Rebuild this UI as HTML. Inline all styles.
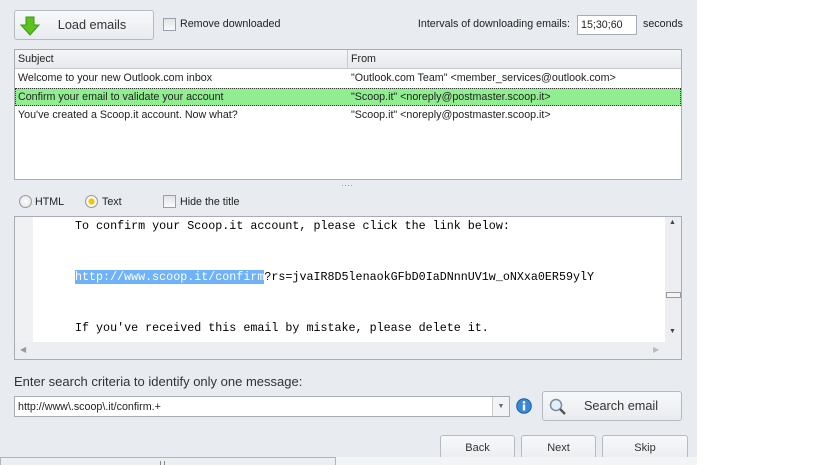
<!DOCTYPE html>
<html><head><style>
*{box-sizing:border-box;margin:0;padding:0}
body{width:818px;height:465px;background:#fff;font-family:"Liberation Sans",sans-serif;font-size:10.7px;color:#222;position:relative;overflow:hidden}
.p{position:absolute;left:0;top:0;width:697px;height:465px;background:#e8ebf0}
.a{position:absolute;white-space:nowrap}
.btn{position:absolute;border:1px solid #b5bac2;border-radius:3px;background:linear-gradient(#f7f8fa,#e9ecf0);text-align:center;color:#333}
.cb{position:absolute;width:13px;height:13px;border:1px solid #9aa0a8;background:linear-gradient(#e2e4e8,#fafafa)}
.mono{font-family:"Liberation Mono",monospace;font-size:11.7px;color:#000}
</style></head><body>
<div class="p">
<div class="btn" style="left:14px;top:10px;width:140px;height:30px;font-size:12.7px;line-height:28px;padding-left:16px">Load emails
<svg style="position:absolute;left:5px;top:5px" width="20" height="20" viewBox="0 0 20 20"><path d="M6 1h8v8h5l-9 10-9-10h5z" fill="#5cc21f" stroke="#3a9a10" stroke-width="1"/></svg></div>
<div class="cb" style="left:163px;top:18px"></div>
<div class="a" style="left:180px;top:18px">Remove downloaded</div>
<div class="a" style="right:127px;top:18px">Intervals of downloading emails:</div>
<div class="a" style="left:577px;top:15px;width:60px;height:20px;background:#fff;border:1px solid #a8adb5;padding:3px 3px">15;30;60</div>
<div class="a" style="left:643px;top:18px">seconds</div>

<div class="a" style="left:14px;top:49px;width:668px;height:131px;background:#fff;border:1px solid #a8adb5"></div>
<div class="a" style="left:15px;top:50px;width:666px;height:19px;background:linear-gradient(#f4f5f7,#e6e9ed);border-bottom:1px solid #c5c9cf"></div>
<div class="a" style="left:347px;top:50px;width:1px;height:19px;background:#c5c9cf"></div>
<div class="a" style="left:18px;top:53px">Subject</div>
<div class="a" style="left:351px;top:53px">From</div>
<div class="a" style="left:18px;top:72px">Welcome to your new Outlook.com inbox</div>
<div class="a" style="left:351px;top:72px">"Outlook.com Team" &lt;member_services@outlook.com&gt;</div>
<div class="a" style="left:15px;top:88px;width:666px;height:18px;background:#90ee90;border:1px dotted #333"></div>
<div class="a" style="left:18px;top:91px">Confirm your email to validate your account</div>
<div class="a" style="left:351px;top:91px">"Scoop.it" &lt;noreply@postmaster.scoop.it&gt;</div>
<div class="a" style="left:18px;top:109px">You've created a Scoop.it account. Now what?</div>
<div class="a" style="left:351px;top:109px">"Scoop.it" &lt;noreply@postmaster.scoop.it&gt;</div>
<div class="a" style="left:341px;top:180px;font-size:9px;color:#889">····</div>

<div class="a" style="left:19px;top:195px;width:13px;height:13px;border-radius:50%;border:1px solid #999;background:radial-gradient(#fff,#ddd)"></div>
<div class="a" style="left:35px;top:196px">HTML</div>
<div class="a" style="left:85px;top:195px;width:13px;height:13px;border-radius:50%;border:1px solid #999;background:radial-gradient(#f8c300 35%,#fff 45%,#ddd)"></div>
<div class="a" style="left:102px;top:196px">Text</div>
<div class="cb" style="left:163px;top:195px"></div>
<div class="a" style="left:180px;top:196px">Hide the title</div>

<div class="a" style="left:14px;top:216px;width:668px;height:144px;background:#fff;border:1px solid #a8adb5"></div>
<div class="a" style="left:15px;top:217px;width:18px;height:125px;background:#f0f1f3"></div>
<div class="a mono" style="left:75px;top:219px">To confirm your Scoop.it account, please click the link below:</div>
<div class="a mono" style="left:75px;top:270px"><span style="background:#6fb2fa;color:#fff">http://www.scoop.it/confirm</span>?rs=jvaIR8D5lenaokGFbD0IaDNnnUV1w_oNXxa0ER59ylY</div>
<div class="a mono" style="left:75px;top:321px">If you've received this email by mistake, please delete it.</div>
<div class="a" style="left:665px;top:217px;width:16px;height:125px;background:#eceef1"></div>
<div class="a" style="left:666px;top:292px;width:15px;height:6px;border:1px solid #999;background:#f4f4f4"></div>
<div class="a" style="left:669px;top:219px;font-size:7px;color:#444">▲</div>
<div class="a" style="left:669px;top:328px;font-size:7px;color:#444">▼</div>
<div class="a" style="left:15px;top:342px;width:666px;height:17px;background:#eceef1"></div>
<div class="a" style="left:20px;top:345px;font-size:8px;color:#999">◀</div>
<div class="a" style="left:653px;top:345px;font-size:8px;color:#bbb">▶</div>

<div class="a" style="left:14px;top:374px;font-size:13px;color:#333">Enter search criteria to identify only one message:</div>
<div class="a" style="left:14px;top:396px;width:496px;height:21px;background:#fff;border:1px solid #a8adb5;padding:4px 3px;font-size:10.7px">http://www\.scoop\.it/confirm.+</div>
<div class="a" style="left:492px;top:397px;width:17px;height:19px;border-left:1px solid #ccc;background:#f2f3f5;font-size:7px;color:#666;text-align:center;line-height:19px">▼</div>
<svg class="a" style="left:516px;top:398px" width="16" height="16" viewBox="0 0 16 16"><circle cx="8" cy="8" r="7.3" fill="#3a87d6" stroke="#1d5fa8"/><circle cx="8" cy="4.3" r="1.3" fill="#fff"/><rect x="6.8" y="6.5" width="2.4" height="6" fill="#fff"/></svg>
<div class="btn" style="left:542px;top:391px;width:140px;height:30px;font-size:12.7px;line-height:28px;padding-left:18px">Search email
<svg style="position:absolute;left:5px;top:5px" width="20" height="20" viewBox="0 0 20 20"><circle cx="8" cy="8" r="5.5" fill="#e4eef8" stroke="#7a8ca0" stroke-width="1.5"/><path d="M12 12l5 5" stroke="#555" stroke-width="2.5"/></svg></div>
<div class="btn" style="left:440px;top:435px;width:75px;height:28px;line-height:24px;font-size:11px">Back</div>
<div class="btn" style="left:521px;top:435px;width:75px;height:28px;line-height:24px;font-size:11px">Next</div>
<div class="btn" style="left:602px;top:435px;width:86px;height:28px;line-height:24px;font-size:11px">Skip</div>
<div class="a" style="left:0;top:457px;width:697px;height:8px;background:#f3f4f6"></div>
<div class="a" style="left:0;top:457px;width:336px;height:8px;background:#eceef1;border:1px solid #b0b4ba;border-bottom:none"></div>
<div class="a" style="left:160px;top:461px;width:5px;height:4px;border-left:1px solid #888;border-right:1px solid #888"></div>
</div>
</body></html>
